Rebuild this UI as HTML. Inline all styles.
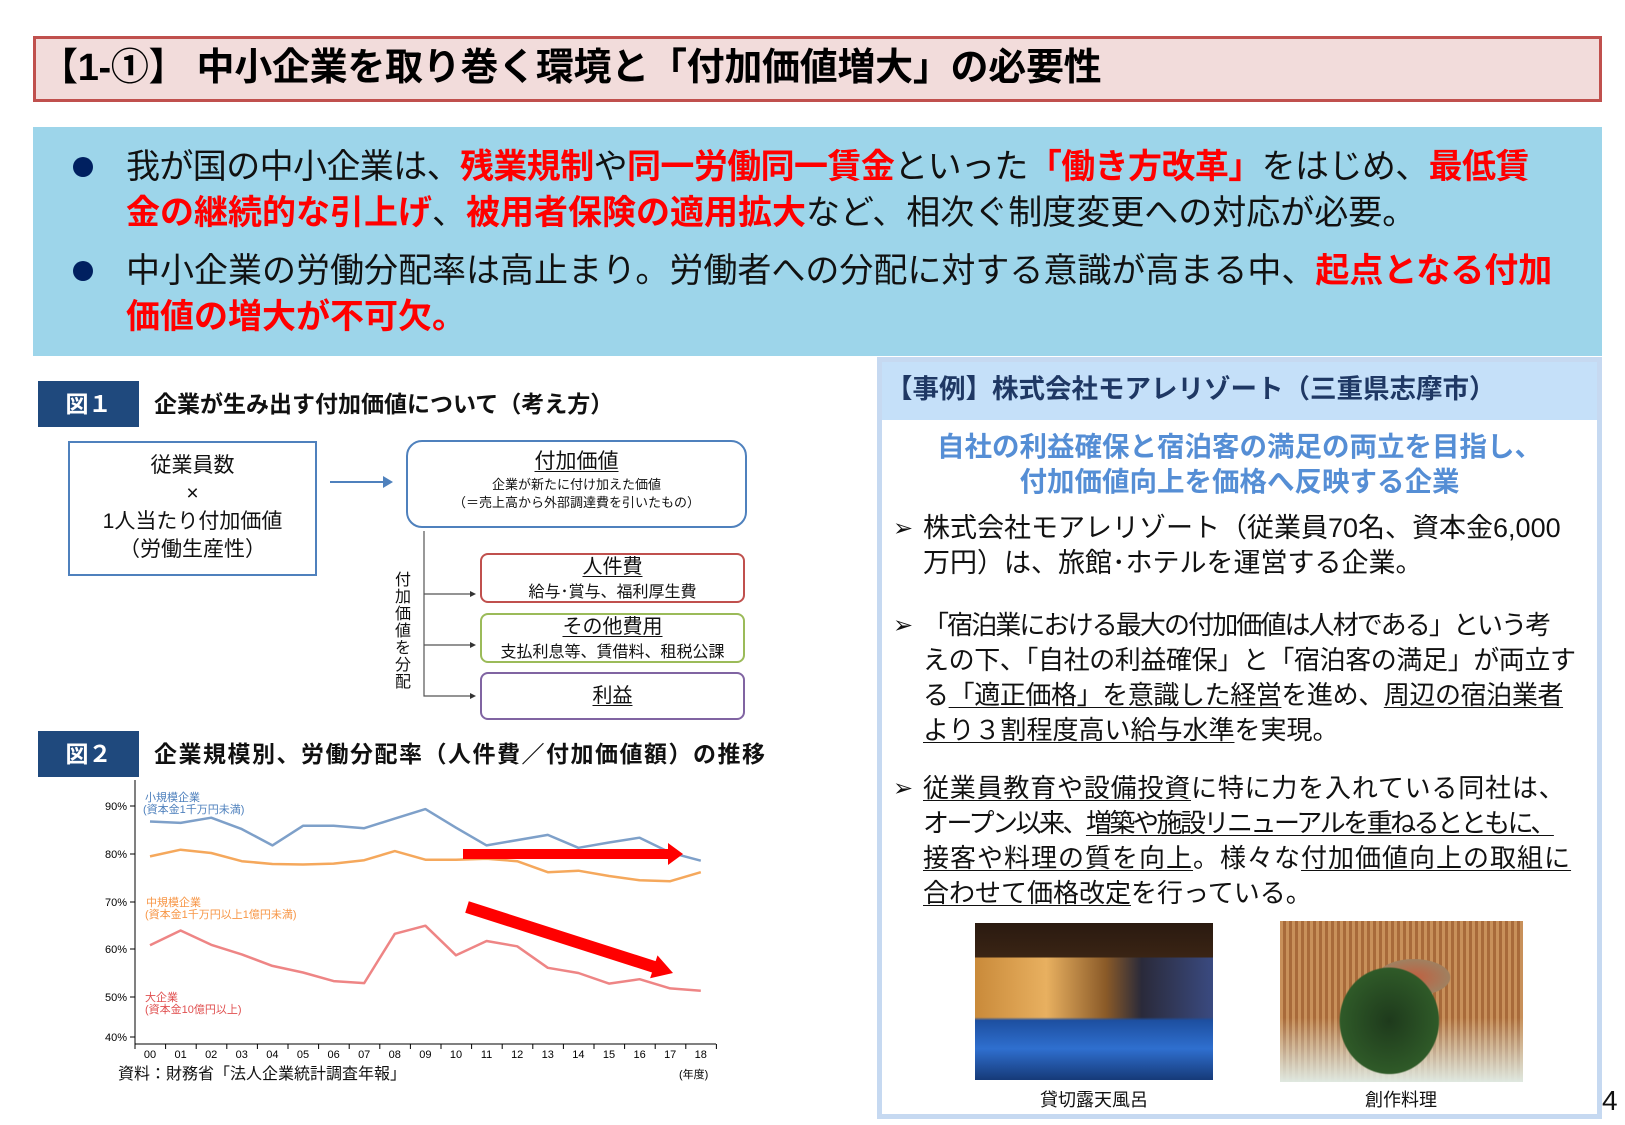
<!DOCTYPE html>
<html><head><meta charset="utf-8">
<style>
*{margin:0;padding:0;box-sizing:border-box}
body{width:1625px;height:1125px;background:#fff;position:relative;overflow:hidden;font-family:"Liberation Sans","Noto Sans CJK JP",sans-serif;color:#111}
.a{position:absolute;white-space:nowrap}
.r{color:#ff0000;font-weight:bold}
u{text-decoration:underline;text-underline-offset:3px;text-decoration-thickness:1px}
.dot{position:absolute;width:20px;height:20px;border-radius:50%;background:#002060}
.ln{display:block}
</style></head><body>

<div class="a" style="left:33px;top:36px;width:1569px;height:66px;background:#f2dcdb;border:3px solid #c0504d"></div>
<div class="a" style="left:40px;top:43px;font-size:38px;font-weight:bold;line-height:50px;color:#000;letter-spacing:-0.3px">【1-①】 中小企業を取り巻く環境と「付加価値増大」の必要性</div>

<div class="a" style="left:33px;top:127px;width:1569px;height:229px;background:#9dd5ea"></div>
<div class="dot" style="left:73px;top:157px"></div>
<div class="dot" style="left:73px;top:261px"></div>
<div class="a" style="left:126px;top:144px;font-size:34px;line-height:46px;color:#111"><span class="ln" style="letter-spacing:-0.6px">我が国の中小企業は、<span class="r">残業規制</span>や<span class="r">同一労働同一賃金</span>といった<span class="r">「働き方改革」</span>をはじめ、<span class="r">最低賃</span></span><span class="ln"><span class="r">金の継続的な引上げ</span>、<span class="r">被用者保険の適用拡大</span>など、相次ぐ制度変更への対応が必要。</span></div>
<div class="a" style="left:126px;top:248px;font-size:34px;line-height:46px;color:#111">中小企業の労働分配率は高止まり。労働者への分配に対する意識が高まる中、<span class="r">起点となる付加</span><br><span class="r">価値の増大が不可欠。</span></div>

<!-- Fig1 -->
<div class="a" style="left:38px;top:381px;width:101px;height:46px;background:#1f497d;color:#fff;font-size:23px;font-weight:bold;line-height:46px;text-align:center">図１</div>
<div class="a" style="left:154px;top:388px;font-size:23px;font-weight:bold;line-height:32px">企業が生み出す付加価値について（考え方）</div>
<div class="a" style="left:68px;top:441px;width:249px;height:135px;border:2px solid #4f81bd;text-align:center;font-size:21px;line-height:28px;padding-top:9px">従業員数<br>×<br>1人当たり付加価値<br>（労働生産性）</div>
<div class="a" style="left:406px;top:440px;width:341px;height:88px;border:2px solid #4f81bd;border-radius:16px;text-align:center;padding-top:6px">
<div style="font-size:21px;line-height:28px"><u>付加価値</u></div>
<div style="font-size:13px;line-height:18px">企業が新たに付け加えた価値<br>（＝売上高から外部調達費を引いたもの）</div></div>
<div class="a" style="left:480px;top:553px;width:265px;height:50px;border:2px solid #c0504d;border-radius:8px;text-align:center;font-size:20px;line-height:24px"><u>人件費</u><br><span style="font-size:16px">給与･賞与、福利厚生費</span></div>
<div class="a" style="left:480px;top:613px;width:265px;height:50px;border:2px solid #9bbb59;border-radius:8px;text-align:center;font-size:20px;line-height:24px"><u>その他費用</u><br><span style="font-size:16px">支払利息等、賃借料、租税公課</span></div>
<div class="a" style="left:480px;top:672px;width:265px;height:48px;border:2px solid #8064a2;border-radius:8px;text-align:center;font-size:20px;line-height:44px"><u>利益</u></div>
<div class="a" style="left:394px;top:572px;width:18px;font-size:16px;line-height:17px;white-space:normal;text-align:center">付加価値を分配</div>

<!-- Fig2 -->
<div class="a" style="left:38px;top:731px;width:101px;height:46px;background:#1f497d;color:#fff;font-size:23px;font-weight:bold;line-height:46px;text-align:center">図２</div>
<div class="a" style="left:154px;top:738px;font-size:23px;font-weight:bold;line-height:32px;letter-spacing:1.5px">企業規模別、労働分配率（人件費／付加価値額）の推移</div>

<svg class="a" style="left:0;top:0" width="1625" height="1125" viewBox="0 0 1625 1125">
<g stroke="#4f81bd" stroke-width="2" fill="#4f81bd">
<line x1="330" y1="482" x2="384" y2="482"/><polygon points="383,476 393,482 383,488" stroke="none"/></g>
<g stroke="#555" stroke-width="1.2" fill="#333">
<polyline points="424,531 424,696 470,696" fill="none"/>
<line x1="424" y1="594" x2="470" y2="594"/><line x1="424" y1="645" x2="470" y2="645"/>
<polygon points="470,591 476,594 470,597" stroke="none"/><polygon points="470,642 476,645 470,648" stroke="none"/><polygon points="470,693 476,696 470,699" stroke="none"/>
</g>
<g stroke="#000" stroke-width="1" fill="none">
<line x1="135" y1="780" x2="135" y2="1044"/><line x1="135" y1="1044" x2="716" y2="1044"/>
<path d="M130 806H135M130 854H135M130 902H135M130 949H135M130 997H135M130 1037H135"/>
<path d="M135 1044v5M165.6 1044v5M196.2 1044v5M226.8 1044v5M257.4 1044v5M288 1044v5M318.6 1044v5M349.2 1044v5M379.8 1044v5M410.4 1044v5M441 1044v5M471.6 1044v5M502.2 1044v5M532.8 1044v5M563.4 1044v5M594 1044v5M624.6 1044v5M655.2 1044v5M685.8 1044v5M716.4 1044v5"/>
</g>
<g font-family="Liberation Sans,Noto Sans CJK JP,sans-serif" font-size="11" fill="#000" text-anchor="end">
<text x="127" y="810">90%</text><text x="127" y="858">80%</text><text x="127" y="906">70%</text><text x="127" y="953">60%</text><text x="127" y="1001">50%</text><text x="127" y="1041">40%</text></g>
<g font-family="Liberation Sans,sans-serif" font-size="11" fill="#000" text-anchor="middle">
<text x="150" y="1058">00</text><text x="180.6" y="1058">01</text><text x="211.2" y="1058">02</text><text x="241.8" y="1058">03</text><text x="272.4" y="1058">04</text><text x="303" y="1058">05</text><text x="333.6" y="1058">06</text><text x="364.2" y="1058">07</text><text x="394.8" y="1058">08</text><text x="425.4" y="1058">09</text><text x="456" y="1058">10</text><text x="486.6" y="1058">11</text><text x="517.2" y="1058">12</text><text x="547.8" y="1058">13</text><text x="578.4" y="1058">14</text><text x="609" y="1058">15</text><text x="639.6" y="1058">16</text><text x="670.2" y="1058">17</text><text x="700.8" y="1058">18</text></g>
<g fill="none" stroke-width="2.5" stroke-linejoin="round">
<polyline stroke="#7ea0c9" points="150,821.5 180.6,822.9 211.2,817.7 241.8,829.1 272.4,845.4 303,825.8 333.6,825.8 364.2,828.2 394.8,818.6 425.4,809.1 456,827.7 486.6,845.4 517.2,840.1 547.8,834.9 578.4,847.8 609,842.5 639.6,837.7 670.2,852.6 700.8,860.7"/>
<polyline stroke="#f5a85c" points="150,856.4 180.6,849.7 211.2,853 241.8,861.2 272.4,864 303,864.5 333.6,863.6 364.2,860.2 394.8,851.1 425.4,859.7 456,859.7 486.6,858.8 517.2,861.2 547.8,872.2 578.4,870.7 609,876 639.6,880.3 670.2,881.2 700.8,872.2"/>
<polyline stroke="#ee8585" points="150,945.3 180.6,930.5 211.2,944.8 241.8,954.4 272.4,965.9 303,972.5 333.6,981.1 364.2,983.1 394.8,933.8 425.4,925.7 456,955.3 486.6,941 517.2,946.3 547.8,967.8 578.4,973 609,983.6 639.6,979.2 670.2,988.4 700.8,990.7"/>
</g>
<polygon fill="#ff0000" points="463,849 668,849 668,843 683,854 668,865 668,859 463,859"/>
<polygon fill="#ff0000" points="468.8,901.3 655.6,961.1 657.5,955.4 673,973 650.1,978.2 652,972.5 465.2,912.7"/>
<g font-family="Liberation Sans,Noto Sans CJK JP,sans-serif" font-size="11">
<text x="145" y="801" fill="#4f81bd">小規模企業</text><text x="143" y="813" fill="#4f81bd">(資本金1千万円未満)</text>
<text x="146" y="906" fill="#f79646">中規模企業</text><text x="145" y="918" fill="#f79646">(資本金1千万円以上1億円未満)</text>
<text x="145" y="1001" fill="#e05050">大企業</text><text x="145" y="1013" fill="#e05050">(資本金10億円以上)</text>
<text x="679" y="1078" fill="#000" font-size="11">(年度)</text>
</g>
</svg>
<div class="a" style="left:118px;top:1064px;font-size:16px;line-height:22px">資料：財務省「法人企業統計調査年報」</div>

<!-- Right panel -->
<div class="a" style="left:877px;top:357px;width:725px;height:762px;border:5px solid #c6d9f1;background:#fff"></div>
<div class="a" style="left:882px;top:362px;width:715px;height:58px;background:#c5e0f9"></div>
<div class="a" style="left:886px;top:372px;font-size:26.5px;font-weight:bold;line-height:34px;color:#1f3864">【事例】株式会社モアレリゾート（三重県志摩市）</div>
<div class="a" style="left:882px;top:429px;width:715px;text-align:center;font-size:27.5px;font-weight:bold;line-height:35px;color:#558ed5">自社の利益確保と宿泊客の満足の両立を目指し、<br>付加価値向上を価格へ反映する企業</div>
<div class="a" style="left:893px;top:511px;font-size:24px;line-height:35px">➢</div>
<div class="a" style="left:893px;top:608px;font-size:24px;line-height:35px">➢</div>
<div class="a" style="left:893px;top:771px;font-size:24px;line-height:35px">➢</div>
<div class="a" style="left:923px;top:511px;font-size:27px;line-height:35px">株式会社モアレリゾート（従業員70名、資本金6,000<br>万円）は、旅館･ホテルを運営する企業。</div>
<div class="a" style="left:923px;top:608px;font-size:26px;line-height:35px"><span class="ln" style="letter-spacing:-1.9px">「宿泊業における最大の付加価値は人材である」という考</span><span class="ln" style="letter-spacing:-0.4px">えの下、「自社の利益確保」と「宿泊客の満足」が両立す</span><span class="ln" style="letter-spacing:-0.4px">る<u>「適正価格」を意識した経営</u>を進め、<u>周辺の宿泊業者</u></span><span class="ln"><u>より３割程度高い給与水準</u>を実現。</span></div>
<div class="a" style="left:923px;top:771px;font-size:26px;line-height:35px"><span class="ln" style="letter-spacing:0.8px"><u>従業員教育や設備投資</u>に特に力を入れている同社は、</span><span class="ln" style="letter-spacing:-2.5px">オープン以来、<u>増築や施設リニューアルを重ねるとともに、</u></span><span class="ln" style="letter-spacing:1px"><u>接客や料理の質を向上</u>。様々な<u>付加価値向上の取組に</u></span><span class="ln"><u>合わせて価格改定</u>を行っている。</span></div>

<div class="a" style="left:975px;top:923px;width:238px;height:157px;background:linear-gradient(180deg,#2a1a10 0%,#3a2414 22%,transparent 22%),linear-gradient(180deg,transparent 60%,#1d4fa0 62%,#2f6fcf 80%,#163a78 100%),linear-gradient(90deg,#c98a3a 0%,#e8b060 30%,#8a5a28 55%,#2a2a3a 70%,#3a4a80 100%)"></div>
<div class="a" style="left:1280px;top:921px;width:243px;height:161px;background:radial-gradient(ellipse 70px 75px at 45% 62%,#1e3a1c 0%,#2f5a28 70%,transparent 72%),radial-gradient(ellipse 60px 30px at 55% 35%,#c06040 0%,#a08060 60%,transparent 62%),linear-gradient(180deg,transparent 60%,#dfe8e0 100%),repeating-linear-gradient(90deg,#c8905a 0 3px,#a86a3a 3px 6px)"></div>
<div class="a" style="left:1040px;top:1088px;font-size:18px;line-height:24px">貸切露天風呂</div>
<div class="a" style="left:1365px;top:1088px;font-size:18px;line-height:24px">創作料理</div>
<div class="a" style="left:1602px;top:1084px;font-size:28px;line-height:34px">4</div>
</body></html>
